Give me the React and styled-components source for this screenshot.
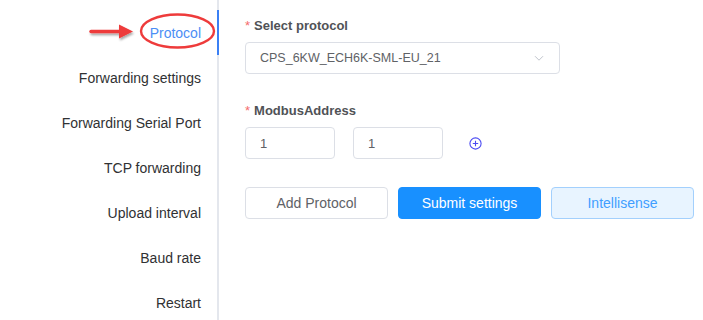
import styled, { createGlobalStyle } from 'styled-components'

const GlobalStyle = createGlobalStyle`
  html, body {
    margin: 0;
    padding: 0;
    background: #fff;
    font-family: "Liberation Sans", Arial, sans-serif;
  }
`

const menuItems = [
  'Protocol',
  'Forwarding settings',
  'Forwarding Serial Port',
  'TCP forwarding',
  'Upload interval',
  'Baud rate',
  'Restart',
]

const CircleIcon = () => (
  <svg width="13" height="13" viewBox="0 0 13 13">
    <circle cx="6.5" cy="6.5" r="5.6" fill="none" stroke="#4b4bf2" strokeWidth="1.1" />
    <path d="M6.5 3.8v5.4M3.8 6.5h5.4" stroke="#4b4bf2" strokeWidth="1.1" />
  </svg>
)

const Chevron = () => (
  <svg width="12" height="12" viewBox="0 0 12 12">
    <path d="M2 4.2l4 4 4-4" fill="none" stroke="#c0c4cc" strokeWidth="1" />
  </svg>
)

const Annotation = () => (
  <StyledAnnotation width="220" height="60" viewBox="0 0 220 60">
    <defs>
      <filter id="shadow" x="-20%" y="-50%" width="140%" height="200%">
        <feDropShadow dx="1" dy="2" stdDeviation="1.2" floodColor="#000" floodOpacity="0.35" />
      </filter>
    </defs>
    <g filter="url(#shadow)">
      <path d="M91 31.5h30" stroke="#ee3b3b" strokeWidth="3.5" strokeLinecap="round" />
      <path d="M119 24.5l14 7-14 7z" fill="#ee3b3b" />
    </g>
    <ellipse cx="177.5" cy="31" rx="36.5" ry="16.5" fill="none" stroke="#ee3b3b" strokeWidth="2.4" />
  </StyledAnnotation>
)

export default function App() {
  return (
    <>
      <GlobalStyle />
      <StyledPage>
        <StyledSidebar>
          {menuItems.map((item, i) => (
            <StyledMenuItem key={item} $active={i === 0}>
              {item}
            </StyledMenuItem>
          ))}
          <Annotation />
        </StyledSidebar>

        <StyledContent>
          <StyledFormItem>
            <StyledLabel>Select protocol</StyledLabel>
            <StyledSelect>
              <span>CPS_6KW_ECH6K-SML-EU_21</span>
              <Chevron />
            </StyledSelect>
          </StyledFormItem>

          <StyledFormItem $top={27}>
            <StyledLabel>ModbusAddress</StyledLabel>
            <StyledInputRow>
              <StyledInput defaultValue="1" />
              <StyledInput defaultValue="1" />
              <StyledIconButton>
                <CircleIcon />
              </StyledIconButton>
            </StyledInputRow>
          </StyledFormItem>

          <StyledButtonRow>
            <StyledButton $variant="default">Add Protocol</StyledButton>
            <StyledButton $variant="primary">Submit settings</StyledButton>
            <StyledButton $variant="plain">Intellisense</StyledButton>
          </StyledButtonRow>
        </StyledContent>
      </StyledPage>
    </>
  )
}

const StyledPage = styled.div`
  display: flex;
  width: 703px;
  height: 320px;
  overflow: hidden;
`

const StyledSidebar = styled.div`
  position: relative;
  width: 217px;
  padding-top: 10px;
  border-right: 2px solid #e4e7ed;
  display: flex;
  flex-direction: column;
  flex-shrink: 0;
`

const StyledMenuItem = styled.div`
  flex-shrink: 0;
  height: 45px;
  display: flex;
  align-items: center;
  justify-content: flex-end;
  padding-right: 16px;
  margin-right: -2px;
  border-right: 2px solid ${(p) => (p.$active ? '#3b80f5' : 'transparent')};
  font-size: 14px;
  color: ${(p) => (p.$active ? '#4b8ef5' : '#303133')};
`

const StyledAnnotation = styled.svg`
  position: absolute;
  left: 0;
  top: 0;
  pointer-events: none;
`

const StyledContent = styled.div`
  padding: 16px 0 0 26px;
  display: flex;
  flex-direction: column;
`

const StyledFormItem = styled.div`
  display: flex;
  flex-direction: column;
  gap: 6px;
  margin-top: ${(p) => p.$top || 0}px;
`

const StyledLabel = styled.label`
  line-height: 20px;
  font-size: 13px;
  font-weight: 700;
  color: #505256;

  &::before {
    content: '*';
    color: #f56c6c;
    margin-right: 4px;
    font-weight: 400;
  }
`

const StyledSelect = styled.div`
  box-sizing: border-box;
  width: 315px;
  height: 32px;
  border: 1px solid #dcdfe6;
  border-radius: 4px;
  padding: 0 14px;
  display: flex;
  align-items: center;
  justify-content: space-between;
  font-size: 12.5px;
  color: #606266;
`

const StyledInputRow = styled.div`
  display: flex;
  align-items: center;
  gap: 18px;
`

const StyledInput = styled.input`
  box-sizing: border-box;
  width: 90px;
  height: 32px;
  border: 1px solid #dcdfe6;
  border-radius: 4px;
  padding: 0 14px;
  font-family: inherit;
  font-size: 13px;
  color: #606266;
  outline: none;
`

const StyledIconButton = styled.span`
  display: flex;
  margin-left: 8px;
`

const variants = {
  default: { bg: '#fff', border: '#dcdfe6', color: '#606266' },
  primary: { bg: '#1890ff', border: '#1890ff', color: '#fff' },
  plain: { bg: '#e8f4ff', border: '#a3d0fd', color: '#409eff' },
}

const StyledButtonRow = styled.div`
  display: flex;
  gap: 10px;
  margin-top: 28px;
`

const StyledButton = styled.button`
  box-sizing: border-box;
  width: 143px;
  height: 32px;
  border-radius: 4px;
  border: 1px solid ${(p) => variants[p.$variant].border};
  background: ${(p) => variants[p.$variant].bg};
  color: ${(p) => variants[p.$variant].color};
  font-family: inherit;
  font-size: 14px;
  cursor: pointer;
`
